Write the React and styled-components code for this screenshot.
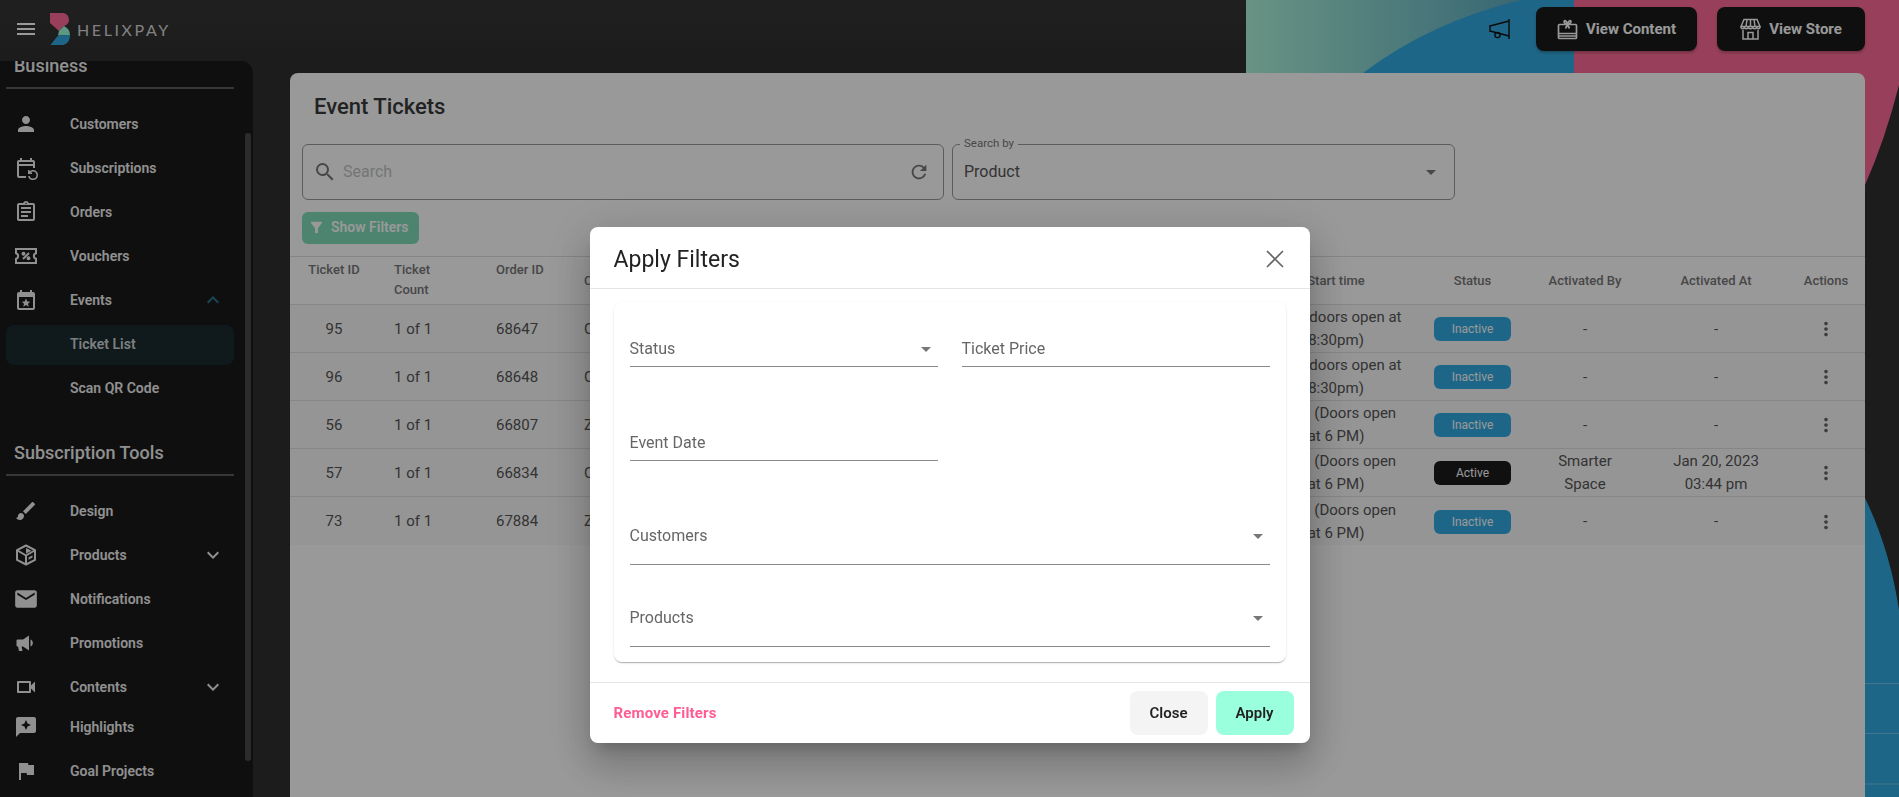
import React from 'react'
import styled, { createGlobalStyle } from 'styled-components'
import {
  MdMenu, MdPerson, MdOutlineEventRepeat, MdOutlineAssignment, MdExpandLess, MdExpandMore,
  MdBrush, MdEmail, MdOutlineVideocam, MdReviews, MdFlag, MdSearch, MdRefresh,
  MdArrowDropDown, MdFilterAlt, MdMoreVert,
} from 'react-icons/md'

const GlobalStyle = createGlobalStyle`
  html, body { margin: 0; padding: 0; height: 100%; }
  body { font-family: Roboto, "Liberation Sans", sans-serif; overflow: hidden; }
  * { box-sizing: border-box; }
`

const VoucherIcon = () => (
  <svg width="24" height="24" viewBox="0 0 24 24" fill="none" stroke="currentColor" strokeWidth="2">
    <path d="M2 5h20v4.2a2.9 2.9 0 0 0 0 5.6V19H2v-4.2a2.9 2.9 0 0 0 0-5.6z" />
    <path d="M15 9l-6 6" />
    <circle cx="9.5" cy="9.8" r="1" fill="currentColor" />
    <circle cx="14.5" cy="14.2" r="1" fill="currentColor" />
  </svg>
)

const EventStarIcon = () => (
  <svg width="24" height="24" viewBox="0 0 24 24" fill="currentColor">
    <path d="M19 4h-1V2h-2v2H8V2H6v2H5a2 2 0 0 0-2 2v14a2 2 0 0 0 2 2h14a2 2 0 0 0 2-2V6a2 2 0 0 0-2-2zm0 16H5V9h14v11z" />
    <path d="M12 10.6l1.3 2.8 3 .3-2.3 2 .7 3-2.7-1.6-2.7 1.6.7-3-2.3-2 3-.3z" />
  </svg>
)

const ProductIcon = () => (
  <svg width="24" height="24" viewBox="0 0 24 24" fill="none" stroke="currentColor" strokeWidth="2" strokeLinejoin="round">
    <path d="M12 2.5l9 4.6v9.8l-9 4.6-9-4.6V7.1z" />
    <path d="M3.5 7.5l8.5 5 8.5-5M12 12.5v9" />
    <path d="M12 5l5.5 2.8L12 10.5z" fill="currentColor" stroke="none" />
    <path d="M14.5 14.5l4-2.2v2.2l-4 2.2z" fill="currentColor" stroke="none" />
  </svg>
)

const HornIcon = () => (
  <svg width="24" height="24" viewBox="0 0 24 24" fill="currentColor">
    <path d="M2.5 9.5a1 1 0 0 1 1-1H9l6-4v15l-6-4H7.6l.9 4.5H5L4 15.5h-.5a1 1 0 0 1-1-1z" />
    <path d="M16.5 8.2a4.2 4.2 0 0 1 0 7.6z" />
  </svg>
)

const GiftIcon = () => (
  <svg width="21" height="21" viewBox="0 0 21 21" fill="none" stroke="currentColor" strokeWidth="1.7">
    <rect x="1.5" y="5.5" width="18" height="14" rx="1" />
    <path d="M1.5 14.5h18M1.5 17h18" />
    <path d="M10.5 5.5C8 5 6.5 3.5 7.2 2c.8-1 2.6.2 3.3 3.5zM10.5 5.5C13 5 14.5 3.5 13.8 2c-.8-1-2.6.2-3.3 3.5zM10.5 5.5l-2 4M10.5 5.5l2 4" />
  </svg>
)

const StoreIcon = () => (
  <svg width="21" height="22" viewBox="0 0 21 22" fill="none" stroke="currentColor" strokeWidth="1.5">
    <path d="M4 1.5h13l3 7H1z" />
    <path d="M1 8.5c0 3 3.2 3 3.2 0 0 3 4.2 3 4.2 0 0 3 4.2 3 4.2 0 0 3 4.2 3 4.2 0 0 3 3.2 3 3.2 0" />
    <path d="M7 1.5l-1 7M10.5 1.5v7M14 1.5l1 7" />
    <path d="M3 12v9h15v-9M8 21v-6.5h5V21" />
  </svg>
)

const MegaphoneIcon = () => (
  <svg width="22" height="22" viewBox="0 0 22 22" fill="none" stroke="currentColor" strokeWidth="1.4">
    <path d="M2 7v7M21 1v20M2 8l19-5M2 13l19 5" />
    <circle cx="9.5" cy="17" r="2.6" />
  </svg>
)

const CrossIcon = () => (
  <svg width="18" height="18" viewBox="0 0 18 18" fill="none" stroke="currentColor" strokeWidth="1.7">
    <path d="M1 1l16 16M17 1L1 17" />
  </svg>
)

const Logo = () => (
  <svg width="20" height="32" viewBox="0 0 20 32">
    <path d="M0 0h13q6 1 6 7 0 4-5 6l-5 5-9-8z" fill="#fe6c98" />
    <path d="M14 13q6 3 6 9l-12 .5 1-4.5z" fill="#99ffdd" />
    <path d="M8 22.5L20 22q0 8-7 10H.5z" fill="#33abe2" />
  </svg>
)

const businessItems = [
  { label: 'Customers', icon: <MdPerson size={24} /> },
  { label: 'Subscriptions', icon: <MdOutlineEventRepeat size={24} /> },
  { label: 'Orders', icon: <MdOutlineAssignment size={24} /> },
  { label: 'Vouchers', icon: <VoucherIcon /> },
  { label: 'Events', icon: <EventStarIcon />, open: true },
]

const toolItems = [
  { label: 'Design', icon: <MdBrush size={24} /> },
  { label: 'Products', icon: <ProductIcon />, closed: true },
  { label: 'Notifications', icon: <MdEmail size={26} /> },
  { label: 'Promotions', icon: <HornIcon /> },
  { label: 'Contents', icon: <MdOutlineVideocam size={24} />, closed: true },
  { label: 'Highlights', icon: <MdReviews size={24} />, pull: true },
  { label: 'Goal Projects', icon: <MdFlag size={24} /> },
]

const doorsAt = ['7pm (doors open at', '8:30pm)']
const doorsSix = ['7 PM\u00a0(Doors open', 'at 6 PM)']

const tickets = [
  { id: 95, order: 68647, customer: 'Cara Santos', start: doorsAt },
  { id: 96, order: 68648, customer: 'Cara Santos', start: doorsAt },
  { id: 56, order: 66807, customer: 'Zoe Reyes', start: doorsSix },
  { id: 57, order: 66834, customer: 'Cris Lim', start: doorsSix, active: true, by: ['Smarter', 'Space'], at: ['Jan 20, 2023', '03:44 pm'] },
  { id: 73, order: 67884, customer: 'Zoe Reyes', start: doorsSix },
]

function NavItem({ item }) {
  return (
    <NavRow $pull={item.pull}>
      <NavIcon>{item.icon}</NavIcon>
      <NavText>{item.label}</NavText>
      {item.open && <Chevron $accent><MdExpandLess size={24} /></Chevron>}
      {item.closed && <Chevron><MdExpandMore size={24} /></Chevron>}
    </NavRow>
  )
}

export default function App() {
  return (
    <Page>
      <GlobalStyle />
      <Backdrop viewBox="0 0 1899 797" width="1899" height="797">
        <defs>
          <linearGradient id="teal" x1="0" x2="1" y1="0" y2="0">
            <stop offset="0" stopColor="#aef5dc" />
            <stop offset="1" stopColor="#4f9fbd" />
          </linearGradient>
        </defs>
        <rect x="1246" y="0" width="328" height="120" fill="url(#teal)" />
        <path d="M1574 0H1521Q1430 22 1363 73L1330 120H1574z" fill="#33abe2" />
        <path d="M1574 0H1899V85Q1885 140 1865 185L1700 400H1574z" fill="#fe6c98" />
        <path d="M1865 498Q1890 550 1899 610V797H1865z" fill="#33abe2" />
        <path d="M1865 683.5H1899M1865 733.5H1899M1865 784H1899" stroke="#fff" strokeOpacity=".3" />
      </Backdrop>

      <TopBar>
        <MenuButton><MdMenu size={24} /></MenuButton>
        <LogoWrap>
          <Logo />
          <LogoText>HELIXPAY</LogoText>
        </LogoWrap>
        <TopActions>
          <Megaphone><MegaphoneIcon /></Megaphone>
          <DarkButton $w={161}><GiftIcon />View Content</DarkButton>
          <DarkButton $w={148}><StoreIcon />View Store</DarkButton>
        </TopActions>
      </TopBar>

      <Body>
        <Sidebar>
          <SideScroll>
            <SideHeading $first>Business</SideHeading>
            <SideGroup>
              {businessItems.map((item) => <NavItem key={item.label} item={item} />)}
              <SubRow $active>Ticket List</SubRow>
              <SubRow>Scan QR Code</SubRow>
            </SideGroup>
            <SideHeading>Subscription Tools</SideHeading>
            <SideGroup>
              {toolItems.map((item) => <NavItem key={item.label} item={item} />)}
            </SideGroup>
          </SideScroll>
          <ScrollThumb />
        </Sidebar>

        <Main>
          <Card>
            <Title>Event Tickets</Title>
            <SearchRow>
              <SearchBox>
                <MdSearch size={24} />
                <Placeholder>Search</Placeholder>
                <MdRefresh size={22} />
              </SearchBox>
              <SelectBox>
                <Legend>Search by</Legend>
                <span>Product</span>
                <MdArrowDropDown size={24} />
              </SelectBox>
            </SearchRow>
            <FilterButton><MdFilterAlt size={17} />Show Filters</FilterButton>

            <Table>
              <HeadRow>
                <HeadCell $top $center>Ticket ID</HeadCell>
                <HeadCell $top>Ticket<br />Count</HeadCell>
                <HeadCell $top>Order ID</HeadCell>
                <HeadCell>Customer</HeadCell>
                <HeadCell $center>Start time</HeadCell>
                <HeadCell $center>Status</HeadCell>
                <HeadCell $center>Activated By</HeadCell>
                <HeadCell $center>Activated At</HeadCell>
                <HeadCell $center>Actions</HeadCell>
              </HeadRow>
              {tickets.map((t, i) => (
                <Row key={t.id} $last={i === tickets.length - 1}>
                  <Cell $center>{t.id}</Cell>
                  <Cell>1 of 1</Cell>
                  <Cell>{t.order}</Cell>
                  <Cell>{t.customer}</Cell>
                  <Cell $center>{t.start.map((l) => <Line key={l}>{l}</Line>)}</Cell>
                  <Cell $center><Badge $active={t.active}>{t.active ? 'Active' : 'Inactive'}</Badge></Cell>
                  <Cell $center>{t.by ? t.by.map((l) => <Line key={l}>{l}</Line>) : '-'}</Cell>
                  <Cell $center>{t.at ? t.at.map((l) => <Line key={l}>{l}</Line>) : '-'}</Cell>
                  <Cell $center><MoreButton><MdMoreVert size={22} /></MoreButton></Cell>
                </Row>
              ))}
            </Table>
          </Card>
        </Main>
      </Body>

      <Overlay>
        <Modal>
          <ModalHeader>
            <ModalTitle>Apply Filters</ModalTitle>
            <CloseIcon><CrossIcon /></CloseIcon>
          </ModalHeader>
          <ModalBody>
            <FilterCard>
              <Field>
                <span>Status</span>
                <MdArrowDropDown size={24} />
              </Field>
              <Field><span>Ticket Price</span></Field>
              <Field $mt={45}><span>Event Date</span></Field>
              <Field $wide $tall $mt={48}>
                <span>Customers</span>
                <MdArrowDropDown size={24} />
              </Field>
              <Field $wide $tall $mt={26}>
                <span>Products</span>
                <MdArrowDropDown size={24} />
              </Field>
            </FilterCard>
          </ModalBody>
          <ModalFooter>
            <RemoveLink>Remove Filters</RemoveLink>
            <FooterButtons>
              <FooterButton>Close</FooterButton>
              <FooterButton $primary>Apply</FooterButton>
            </FooterButtons>
          </ModalFooter>
        </Modal>
      </Overlay>
    </Page>
  )
}

const Page = styled.div`
  position: relative;
  height: 100vh;
  overflow: hidden;
  display: flex;
  flex-direction: column;
  background: linear-gradient(#363636, #2f2f2f 60px);
`

const Backdrop = styled.svg`
  position: absolute;
  top: 0;
  left: 0;
`

const TopBar = styled.header`
  position: relative;
  height: 61px;
  flex-shrink: 0;
  display: flex;
  align-items: center;
  padding: 0 34px 3px 14px;
`

const MenuButton = styled.div`
  display: flex;
  color: #fff;
`

const LogoWrap = styled.div`
  display: flex;
  align-items: center;
  margin-left: 12px;
`

const LogoText = styled.span`
  margin-left: 7px;
  font-family: Lato, sans-serif;
  font-size: 16px;
  letter-spacing: 2.6px;
  color: #d8d8d8;
`

const TopActions = styled.div`
  margin-left: auto;
  display: flex;
  align-items: center;
  gap: 20px;
`

const Megaphone = styled.div`
  display: flex;
  margin-right: 6px;
  color: #111;
`

const DarkButton = styled.button`
  width: ${(p) => p.$w}px;
  height: 44px;
  padding: 0;
  display: flex;
  align-items: center;
  justify-content: center;
  gap: 8px;
  border: 0;
  border-radius: 8px;
  background: #191919;
  color: #fff;
  font-family: inherit;
  font-size: 15px;
  font-weight: 700;
  box-shadow: 0 2px 3px rgba(0, 0, 0, 0.25);
`

const Body = styled.div`
  position: relative;
  flex: 1;
  min-height: 0;
  display: flex;
`

const Sidebar = styled.aside`
  position: relative;
  width: 253px;
  flex-shrink: 0;
  overflow: hidden;
  background: #191919;
  border-top-right-radius: 12px;
`

const SideScroll = styled.div`
  margin-top: -16px;
  padding: 0 19px 0 6px;
`

const SideHeading = styled.div`
  height: ${(p) => (p.$first ? '44px' : '45px')};
  margin-top: ${(p) => (p.$first ? '0' : '21px')};
  padding: ${(p) => (p.$first ? '9px' : '10px')} 0 0 8px;
  border-bottom: 2px solid #5c5c5c;
  font-size: 18px;
  line-height: 24px;
  font-weight: 500;
  color: #f0f0f0;
`

const SideGroup = styled.div`
  padding-top: 13px;
`

const NavRow = styled.div`
  height: 44px;
  margin-top: ${(p) => (p.$pull ? '-4px' : '0')};
  display: flex;
  align-items: center;
  color: #f0f0f0;
`

const NavIcon = styled.span`
  width: 40px;
  display: flex;
  justify-content: center;
  margin-right: 24px;
`

const NavText = styled.span`
  font-size: 14px;
  font-weight: 600;
`

const Chevron = styled.span`
  margin-left: auto;
  margin-right: 9px;
  display: flex;
  color: ${(p) => (p.$accent ? '#30798e' : '#f0f0f0')};
`

const SubRow = styled.div`
  height: ${(p) => (p.$active ? '40px' : '44px')};
  margin: ${(p) => (p.$active ? '3px 0 1px' : '0')};
  padding: ${(p) => (p.$active ? '0 0 2px 64px' : '0 0 0 64px')};
  display: flex;
  align-items: center;
  border-radius: 8px;
  background: ${(p) => (p.$active ? '#1b2a2d' : 'transparent')};
  color: ${(p) => (p.$active ? '#cfd6d8' : '#f0f0f0')};
  font-size: 14px;
  font-weight: 600;
`

const ScrollThumb = styled.div`
  position: absolute;
  top: 72px;
  right: 2px;
  width: 6px;
  height: 628px;
  border-radius: 3px;
  background: #4a4a4a;
`

const Main = styled.main`
  flex: 1;
  min-width: 0;
  padding: 12px 34px 0 37px;
`

const Card = styled.section`
  height: 100%;
  border-radius: 8px 8px 0 0;
  background: #fff;
`

const Title = styled.h1`
  margin: 0;
  padding: 21px 24px 24px;
  font-size: 22px;
  line-height: 26px;
  font-weight: 500;
  color: #3a3a3a;
`

const SearchRow = styled.div`
  display: flex;
  gap: 8px;
  padding: 0 12px;
`

const SearchBox = styled.div`
  width: 642px;
  height: 56px;
  padding: 0 13px 1px 10px;
  display: flex;
  align-items: center;
  border: 1px solid #9a9a9a;
  border-radius: 6px;
  color: #777;
`

const Placeholder = styled.span`
  flex: 1;
  margin-left: 6px;
  font-size: 16px;
  color: #c4c4c4;
`

const SelectBox = styled.div`
  position: relative;
  width: 503px;
  height: 56px;
  padding: 0 11px 1px;
  display: flex;
  align-items: center;
  justify-content: space-between;
  border: 1px solid #9a9a9a;
  border-radius: 6px;
  font-size: 16px;
  color: #555;
  svg { color: #777; }
`

const Legend = styled.span`
  position: absolute;
  top: -8px;
  left: 7px;
  padding: 0 4px;
  background: #fff;
  font-size: 11.5px;
  line-height: 13px;
  color: #777;
`

const FilterButton = styled.button`
  width: 117px;
  height: 32px;
  margin: 12px 0 12px 12px;
  padding: 0 0 2px 6px;
  display: flex;
  align-items: center;
  gap: 6px;
  border: 0;
  border-radius: 6px;
  background: #7fdcb9;
  color: #fff;
  font-family: inherit;
  font-size: 14px;
  font-weight: 600;
`

const Table = styled.div`
  border-top: 1px solid #dedede;
`

const columns = '88px 102px 88px 684px 168px 105px 120px 142px 78px'

const HeadRow = styled.div`
  height: 48px;
  display: grid;
  grid-template-columns: ${columns};
  border-bottom: 1px solid #e0e0e0;
`

const HeadCell = styled.div`
  align-self: ${(p) => (p.$top ? 'start' : 'center')};
  padding: ${(p) => (p.$top ? '3px' : '0')} ${(p) => (p.$center ? '0' : '16px')} 0;
  text-align: ${(p) => (p.$center ? 'center' : 'left')};
  font-size: 13px;
  line-height: 20px;
  font-weight: 500;
  color: #777;
`

const Row = styled.div`
  height: 48px;
  padding-top: 1px;
  display: grid;
  grid-template-columns: ${columns};
  align-items: center;
  background: #f9f9f9;
  border-bottom: ${(p) => (p.$last ? '0' : '1px solid #e0e0e0')};
`

const Cell = styled.div`
  padding: 0 ${(p) => (p.$center ? '0' : '16px')};
  text-align: ${(p) => (p.$center ? 'center' : 'left')};
  font-size: 15px;
  line-height: 23px;
  color: #555;
`

const Line = styled.span`
  display: block;
`

const Badge = styled.span`
  display: inline-block;
  width: 77px;
  height: 24px;
  vertical-align: middle;
  border-radius: 6px;
  background: ${(p) => (p.$active ? '#1c1c1c' : '#33abe2')};
  color: #fff;
  font-size: 12px;
  line-height: 24px;
`

const MoreButton = styled.span`
  display: flex;
  justify-content: center;
  color: #666;
`

const Overlay = styled.div`
  position: fixed;
  inset: 0;
  display: flex;
  justify-content: center;
  align-items: flex-start;
  padding-top: 227px;
  background: rgba(0, 0, 0, 0.4);
`

const Modal = styled.div`
  width: 720px;
  border-radius: 8px;
  background: #fff;
  box-shadow: 0 11px 15px -7px rgba(0, 0, 0, 0.2), 0 24px 38px 3px rgba(0, 0, 0, 0.14), 0 9px 46px 8px rgba(0, 0, 0, 0.12);
`

const ModalHeader = styled.div`
  height: 62px;
  padding: 3px 26px 0 24px;
  display: flex;
  align-items: center;
  justify-content: space-between;
  border-bottom: 1px solid #e4e4e4;
`

const ModalTitle = styled.h2`
  margin: 0;
  font-size: 23px;
  font-weight: 400;
  color: #222;
`

const CloseIcon = styled.span`
  display: flex;
  color: #666;
`

const ModalBody = styled.div`
  padding: 13px 24px 20px;
`

const FilterCard = styled.div`
  display: grid;
  grid-template-columns: 1fr 1fr;
  align-items: start;
  column-gap: 24px;
  padding: 16px 16px 15px;
  border-radius: 8px;
  box-shadow: 0 2px 1px -1px rgba(0, 0, 0, 0.2), 0 1px 1px rgba(0, 0, 0, 0.06), 0 1px 3px rgba(0, 0, 0, 0.1);
`

const Field = styled.div`
  grid-column: ${(p) => (p.$wide ? '1 / -1' : 'auto')};
  height: ${(p) => (p.$tall ? '56px' : '49px')};
  margin-top: ${(p) => p.$mt || 0}px;
  padding-bottom: ${(p) => (p.$tall ? '16px' : '5px')};
  display: flex;
  align-items: flex-end;
  justify-content: space-between;
  border-bottom: 1px solid #8a8a8a;
  font-size: 16px;
  line-height: 24px;
  color: #666;
  svg { color: #777; }
`

const ModalFooter = styled.div`
  height: 61px;
  padding: 0 16px 0 24px;
  display: flex;
  align-items: center;
  justify-content: space-between;
  border-top: 1px solid #e4e4e4;
`

const RemoveLink = styled.span`
  font-size: 15px;
  font-weight: 700;
  letter-spacing: 0.15px;
  color: #ff5c93;
`

const FooterButtons = styled.div`
  display: flex;
  gap: 8px;
`

const FooterButton = styled.button`
  width: 78px;
  height: 44px;
  border: 0;
  border-radius: 8px;
  background: ${(p) => (p.$primary ? '#99ffdd' : '#f4f4f4')};
  color: #222;
  font-family: inherit;
  font-size: 15px;
  font-weight: 600;
`
